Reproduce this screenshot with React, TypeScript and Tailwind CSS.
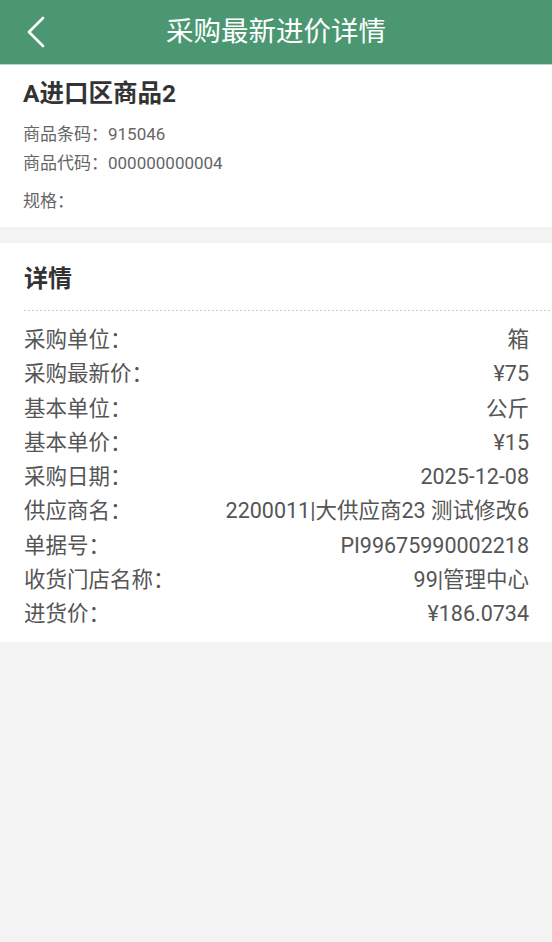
import React from "react";

const rows: [string, string][] = [
  ["采购单位：", "箱"],
  ["采购最新价：", "¥75"],
  ["基本单位：", "公斤"],
  ["基本单价：", "¥15"],
  ["采购日期：", "2025-12-08"],
  ["供应商名：", "2200011|大供应商23 测试修改6"],
  ["单据号：", "PI99675990002218"],
  ["收货门店名称：", "99|管理中心"],
  ["进货价：", "¥186.0734"],
];

export default function App() {
  return (
    <div
      className="w-[552px] h-[942px] bg-[#f3f3f3] flex flex-col"
      style={{ fontFamily: 'Roboto, "Noto Sans CJK SC", sans-serif' }}
    >
      <div className="relative h-[64px] bg-[#4b9771] flex items-center justify-center shrink-0">
        <svg
          className="absolute left-[24px] top-[15px]"
          width="24"
          height="34"
          viewBox="0 0 24 34"
          fill="none"
        >
          <path d="M19 3 L5 17 L19 31" stroke="white" strokeWidth="2.6" strokeLinecap="round" strokeLinejoin="round" />
        </svg>
        <span className="text-white text-[27.5px] leading-none">采购最新进价详情</span>
      </div>
      <div className="h-px bg-[#b9d8c8] shrink-0" />
      <div className="bg-white pl-[23px] pt-[13px] pb-[11px] flex flex-col">
        <div className="h-[32px] leading-[32px] text-[24.5px] font-bold text-[#333]">A进口区商品2</div>
        <div className="mt-[10px] h-[29px] leading-[29px] text-[17px] text-[#666]">商品条码：915046</div>
        <div className="h-[29px] leading-[29px] text-[17px] text-[#666]">商品代码：000000000004</div>
        <div className="mt-[9px] h-[29px] leading-[29px] text-[17px] text-[#666]">规格：</div>
      </div>
      <div className="h-[16px] shrink-0" />
      <div className="bg-white pl-[24px] pb-[11px] flex flex-col">
        <div className="h-[67px] flex items-center text-[24px] font-bold text-[#333] pt-[4px]">详情</div>
        <div className="h-px bg-[linear-gradient(to_right,#cfcfcf_50%,transparent_50%)] bg-[length:4px_1px]" />
        <div className="pt-[12px] pr-[23px] flex flex-col">
          {rows.map(([k, v]) => (
            <div key={k} className="h-[34.25px] flex items-center justify-between text-[21.5px] text-[#555]">
              <span>{k}</span>
              <span>{v}</span>
            </div>
          ))}
        </div>
      </div>
      <div className="flex-1" />
    </div>
  );
}
